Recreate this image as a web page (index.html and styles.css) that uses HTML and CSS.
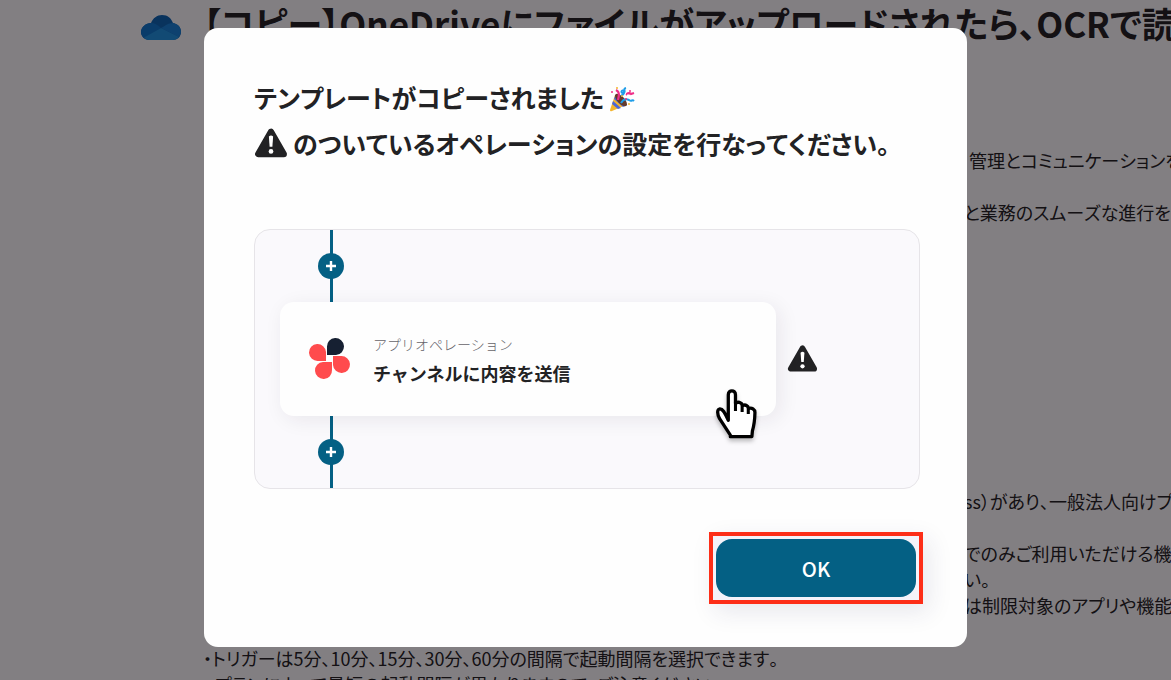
FILE: index.html
```html
<!DOCTYPE html>
<html lang="ja">
<head>
<meta charset="utf-8">
<meta name="viewport" content="width=device-width, initial-scale=1">
<title>テンプレートのコピー</title>
<link rel="stylesheet" href="styles.css">
</head>
<body>
<main class="page">
  <svg class="cloud" viewBox="0 0 40 25" aria-hidden="true">
    <path d="M10 8C12 3 16 0 21 0c6 0 9 3 11 8 5 1 8 4 8 9 0 5-4 8-8 8H8c-5 0-8-4-8-8 0-5 5-9 10-9z" fill="#0d66b5"/>
    <path d="M0 17c0-5 5-9 10-9 4 0 7 2 10 5L3 23c-2-2-3-4-3-6z" fill="#0f78ce"/>
    <path d="M20 13c4-2 7-5 12-5 5 1 8 4 8 9 0 1-1 3-2 5z" fill="#1683d8"/>
    <path d="M3 22.500l17-9.500 18 9c-2 2-4 3-6 3H8c-2 0-4-1-5-2.500z" fill="#1e95e2"/>
  </svg>
  <div class="article">
    <h1 class="title">【コピー】OneDriveにファイルがアップロードされたら、OCRで読<br>み</h1>
    <div class="overview">
      <p>管理とコミュニケーションを</p>
      <p class="clipped">と業務のスムーズな進行を</p>
    </div>
    <div class="notes">
      <p class="clipped">ss）があり、一般法人向けプ</p>
      <p class="clipped group">でのみご利用いただける機</p>
      <p class="clipped">い。</p>
      <p class="clipped">は制限対象のアプリや機能</p>
    </div>
    <ul class="limits">
      <li>・トリガーは5分、10分、15分、30分、60分の間隔で起動間隔を選択できます。</li>
      <li class="detail">プランによって最短の起動間隔が異なりますので、ご注意ください。</li>
    </ul>
  </div>
</main>

<div class="scrim">
  <section class="modal" role="dialog" aria-modal="true" aria-labelledby="modal-title">
    <h2 class="message" id="modal-title">
      <span class="line">テンプレートがコピーされました
        <svg class="party" viewBox="0 0 26 26" aria-hidden="true">
          <path d="M6 8L1 23q0 2 2 1l14-6z" fill="#f4b52e"/>
          <path d="M4 14l8 7-3 1-6-5zM6 9l10 10-2 1L5 12z" fill="#4b67d8"/>
          <ellipse cx="12" cy="13" rx="3.500" ry="8" transform="rotate(-43 12 13)" fill="#633a2c"/>
          <path d="M7 3c4 2 3 6 2 10M18 8c-1-1 2-3 4-1l3-1" fill="none" stroke="#ef2f88" stroke-width="2.200"/>
          <path d="M17 1c-4 1 1 4-3 5-3 0-1-4 1-2 1 3-2 4-3 5M12 16c3-5 6-4 8-3 3 2 3-1 5 1" fill="none" stroke="#1e9de8" stroke-width="2"/>
          <g fill="#ef2f88"><circle cx="3" cy="5" r="1"/><circle cx="21" cy="4" r="1"/><circle cx="17" cy="12" r="1"/></g>
          <g fill="#f4b52e"><circle cx="8" cy="1" r="1"/><circle cx="20" cy="17" r="1"/><circle cx="13" cy="9" r="1"/></g>
        </svg>
      </span>
      <span class="line">
        <svg class="warn warn-large" viewBox="0 0 32 30" role="img" aria-label="警告">
          <path d="M16 4.500L4 25.500h24z" fill="#222224" stroke="#222224" stroke-width="6" stroke-linejoin="round"/>
          <path d="M14 9q2-2 4 0l-.7 9.500h-2.600z" fill="#fff"/><circle cx="16" cy="23" r="2.200" fill="#fff"/>
        </svg>
        のついているオペレーションの設定を行なってください。
      </span>
    </h2>

    <div class="flow">
      <div class="connector"><svg class="plus" viewBox="0 0 26 26" aria-hidden="true"><circle cx="13" cy="13" r="13" fill="#046084"/><path d="M13 8v10M8 13h10" stroke="#fff" stroke-width="2.400"/></svg></div>
      <div class="step">
        <div class="card">
          <svg class="app" viewBox="0 0 42 42" aria-hidden="true">
            <path d="M18 17V9a8.500 8.500 0 1 1 9 8z" fill="#162032"/>
            <path d="M17 23H9a8.500 8.500 0 1 1 8-9z" fill="#ff4b4d"/>
            <path d="M24 18h8a8.500 8.500 0 1 1-8 9z" fill="#ff4b4d"/>
            <path d="M23 24v8a8.500 8.500 0 1 1-9-8z" fill="#ff4b4d"/>
          </svg>
          <div class="label">
            <p class="kind">アプリオペレーション</p>
            <p class="name">チャンネルに内容を送信</p>
          </div>
          <svg class="pointer" viewBox="0 0 40 50" aria-hidden="true">
            <path d="M14 46.500V45L3.500 29C1 24 1 20 3.500 19.500c3-.5 5 3.500 8.500 11V5.500c0-5 7-5 7 0V14c2-2 6-1 7 2 3-1 5 0 6 3 3-1 6 1 6 4-.2 9-1 13-2.500 18l-.5 5.500z" fill="#fff" stroke="#000" stroke-width="3.200" stroke-linejoin="round"/>
            <path d="M19 13v8.500M25.500 15v7.500M31.500 18v6.500" fill="none" stroke="#000" stroke-width="3"/>
          </svg>
        </div>
        <svg class="warn" viewBox="0 0 32 30" role="img" aria-label="警告">
          <path d="M16 4.500L4 25.500h24z" fill="#222224" stroke="#222224" stroke-width="6" stroke-linejoin="round"/>
          <path d="M14 9q2-2 4 0l-.7 9.500h-2.600z" fill="#fff"/><circle cx="16" cy="23" r="2.200" fill="#fff"/>
        </svg>
      </div>
      <div class="connector"><svg class="plus" viewBox="0 0 26 26" aria-hidden="true"><circle cx="13" cy="13" r="13" fill="#046084"/><path d="M13 8v10M8 13h10" stroke="#fff" stroke-width="2.400"/></svg></div>
    </div>

    <div class="actions">
      <div class="highlight"><button class="ok" type="button">OK</button></div>
    </div>
  </section>
</div>
</body>
</html>
```
FILE: styles.css
```css
* { box-sizing: border-box; }

body {
  margin: 0;
  height: 100vh;
  overflow: hidden;
  background: #fff;
  color: #222;
  font-family: "Noto Sans CJK JP", sans-serif;
}

h1, h2, p, ul { margin: 0; padding: 0; }
ul { list-style: none; }
svg { display: block; flex: none; }

.page {
  display: flex;
  align-items: flex-start;
  gap: 22px;
  height: 100%;
  overflow: hidden;
  padding-left: 141px;
  white-space: nowrap;
  font-feature-settings: "palt";
  font-kerning: none;
}
.cloud { width: 40px; margin-top: 15px; }
.article { font-size: 18px; line-height: 26px; }
.title { font-size: 35px; line-height: 46px; font-weight: 700; }
.overview { display: grid; gap: 26px; padding: 55px 0 0 766px; }
.notes { padding: 263px 0 0 766px; }
.clipped { margin-left: -5px; }
.group { margin-top: 26px; }
.limits { padding-top: 27px; }
.detail { padding-left: 12px; }

.scrim {
  position: fixed;
  inset: 0;
  display: flex;
  justify-content: center;
  align-items: flex-start;
  padding-top: 28px;
  background: rgba(6, 0, 6, 0.5);
}
.modal {
  width: 100%;
  max-width: 763px;
  padding: 46px 44px 43px 50px;
  border-radius: 14px;
  background: #fefefe;
}
.message {
  font-size: 25px;
  line-height: 46px;
  font-weight: 700;
  color: #222224;
  font-feature-settings: "palt";
  font-kerning: none;
}
.line { display: flex; align-items: center; gap: 5px; white-space: nowrap; }
.party { width: 26px; margin-top: 6px; }
.warn { width: 31px; }
.warn-large { width: 34px; }

.flow {
  margin: 63px 3px 0 0;
  padding-left: 25px;
  border: 1px solid #e6e4e8;
  border-radius: 16px;
  background: #faf9fc;
}
.connector {
  display: flex;
  align-items: center;
  width: 26px;
  height: 72px;
  margin-left: 38px;
  background: linear-gradient(#046084, #046084) center / 3px 100% no-repeat;
}
.plus { width: 26px; }
.step { display: flex; align-items: center; gap: 11px; }
.card {
  position: relative;
  display: flex;
  align-items: center;
  gap: 22px;
  flex: 0 1 496px;
  min-height: 114px;
  padding: 0 29px;
  border-radius: 14px;
  background: #fefefe;
  box-shadow: 4px 4px 20px rgba(40, 30, 50, 0.08);
}
.app { width: 42px; }
.kind { font-size: 14px; line-height: 28px; font-weight: 300; color: #66646a; }
.name { font-size: 18px; line-height: 30px; font-weight: 700; color: #222224; }
.pointer {
  position: absolute;
  right: 19px;
  bottom: -24px;
  width: 41px;
  filter: drop-shadow(0 3px 2px rgba(0, 0, 0, 0.25));
}

.actions { display: flex; justify-content: flex-end; margin-top: 43px; }
.highlight {
  padding: 3px;
  border: 4px solid #fd2e18;
  background: #f4f3fa;
  box-shadow: 6px 8px 24px rgba(40, 40, 90, 0.1);
}
.ok {
  display: block;
  width: 200px;
  height: 58px;
  border: 0;
  border-radius: 16px;
  background: #046084;
  color: #fff;
  font: 500 20px "Noto Sans CJK JP", sans-serif;
}
```
